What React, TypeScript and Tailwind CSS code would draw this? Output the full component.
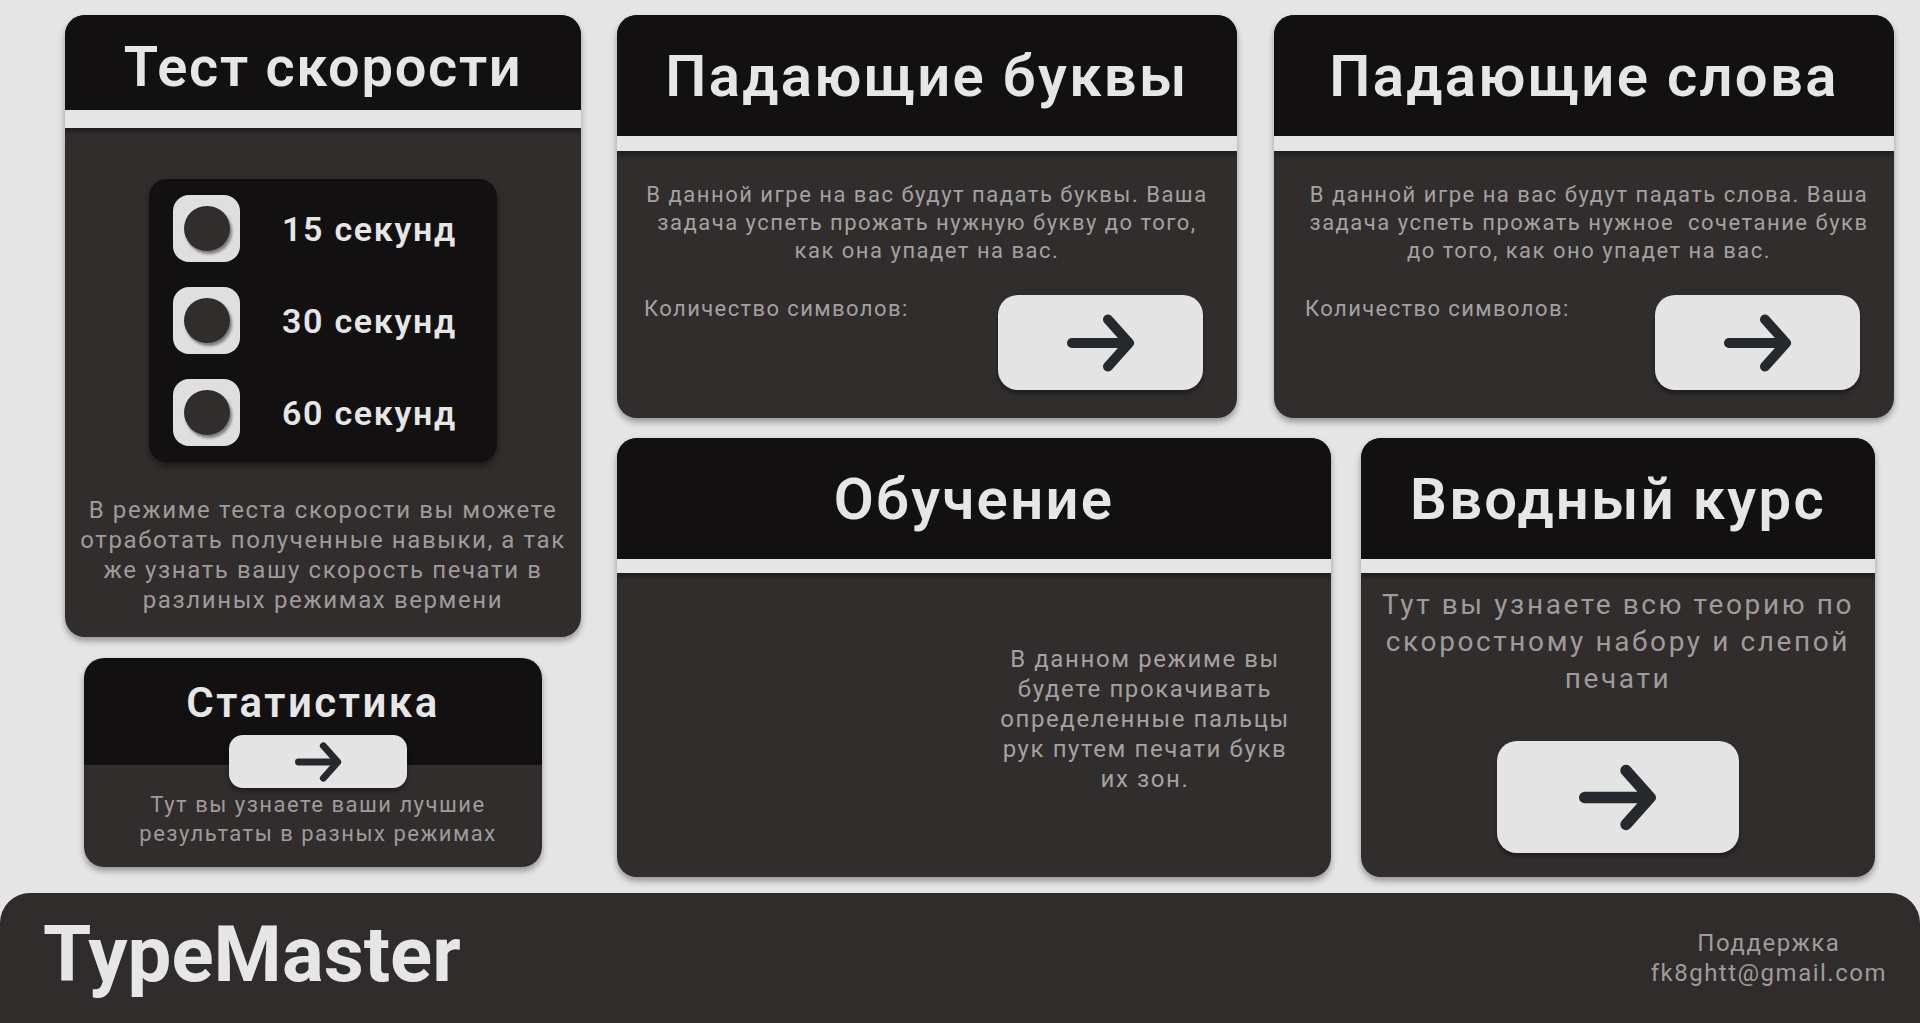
import React from "react";

const HEAD = "bg-[#121011]";
const BODY = "bg-[#312d2d]";

function Arrow({ className }: { className: string }) {
  return (
    <svg viewBox="0 0 68 58" className={className} fill="none" stroke="#25282c" strokeWidth={10} strokeLinecap="round" strokeLinejoin="round">
      <path d="M5 29H60" />
      <path d="M41 5.5L62 29L41 52.5" />
    </svg>
  );
}

function Stripe({ h }: { h: string }) {
  return <div className={`relative z-10 ${h} bg-[#e5e5e5] shadow-[0_4px_4px_rgba(0,0,0,0.35)]`} />;
}

function Radio({ label }: { label: string }) {
  return (
    <div className="flex items-center h-[67px]">
      <div className="w-[67px] h-[67px] rounded-[16px] bg-[#dfdfdf] flex items-center justify-center">
        <div className="w-[46px] h-[45px] rounded-full bg-[#312d2d] shadow-[2px_3px_3px_rgba(0,0,0,0.45)]" />
      </div>
      <span className="ml-[42px] text-[34px] font-semibold tracking-[0.05em] text-[#e6e6e6] leading-none">{label}</span>
    </div>
  );
}

export default function App() {
  return (
    <div className="w-[1920px] h-[1023px] bg-[#e5e5e5] flex flex-col overflow-hidden font-['Roboto',sans-serif]">
      <div className="flex pt-[15px] pl-[65px] h-[877px]">
        {/* Left column */}
        <div className="w-[516px] flex flex-col">
          <div className={`h-[622px] rounded-[20px] overflow-hidden ${BODY} flex flex-col shadow-[0_4px_6px_rgba(0,0,0,0.35)]`}>
            <div className={`${HEAD} h-[95px] flex items-center justify-center pt-[9px]`}>
              <h1 className="text-[56px] font-semibold leading-none tracking-[0.03em] text-[#e6e6e6]">Тест скорости</h1>
            </div>
            <Stripe h="h-[18px]" />
            <div className="flex-1 flex flex-col items-center">
              <div className={`mt-[51px] w-[348px] h-[283px] rounded-[18px] ${HEAD} shadow-[0_4px_6px_rgba(0,0,0,0.45)] pl-[24px] pt-[16px] flex flex-col gap-[25px]`}>
                <Radio label="15 секунд" />
                <Radio label="30 секунд" />
                <Radio label="60 секунд" />
              </div>
              <p className="mt-[33px] text-center text-[24px] leading-[30px] tracking-[1.6px] text-[#9e9b9b]">
                В режиме теста скорости вы можете<br />
                отработать полученные навыки, а так<br />
                же узнать вашу скорость печати в<br />
                разлиных режимах вермени
              </p>
            </div>
          </div>

          <div className="mt-[21px] ml-[19px] w-[458px] h-[209px] rounded-[20px] overflow-hidden bg-[linear-gradient(to_bottom,#121011_107px,#312d2d_107px)] flex flex-col shadow-[0_4px_6px_rgba(0,0,0,0.35)]">
            <h2 className="pt-[24px] text-center text-[42px] font-semibold leading-none tracking-[0.06em] text-[#e6e6e6]">Статистика</h2>
            <div className="mt-[11px] ml-[145px] w-[178px] h-[53px] rounded-[14px] bg-[#e4e4e4] flex items-center justify-center shadow-[0_4px_4px_rgba(0,0,0,0.35)]">
              <Arrow className="w-[47px] h-[40px]" />
            </div>
            <p className="mt-[2px] pl-[10px] text-center text-[22px] leading-[29px] tracking-[1.5px] text-[#9e9b9b]">
              Тут вы узнаете ваши лучшие<br />
              результаты в разных режимах
            </p>
          </div>
        </div>

        {/* Right area */}
        <div className="ml-[36px] flex flex-col">
          <div className="flex gap-[37px]">
            {[
              {
                title: "Падающие буквы",
                lines: ["В данной игре на вас будут падать буквы. Ваша", "задача успеть прожать нужную букву до того,", "как она упадет на вас."],
                pl: "pl-[27px]",
                tp: "",
              },
              {
                title: "Падающие слова",
                lines: ["В данной игре на вас будут падать слова. Ваша", "задача успеть прожать нужное\u00A0 сочетание букв", "до того, как оно упадет на вас."],
                pl: "pl-[31px]",
                tp: "pl-[10px]",
              },
            ].map((c) => (
              <div key={c.title} className={`w-[620px] h-[403px] rounded-[20px] overflow-hidden ${BODY} flex flex-col shadow-[0_4px_6px_rgba(0,0,0,0.35)]`}>
                <div className={`${HEAD} h-[121px] flex items-center justify-center`}>
                  <h2 className="text-[58px] font-semibold leading-none tracking-[0.04em] text-[#e6e6e6]">{c.title}</h2>
                </div>
                <Stripe h="h-[15px]" />
                <p className={`mt-[30px] ${c.tp} text-center text-[22px] leading-[28px] tracking-[1.5px] text-[#a3a1a1]`}>
                  {c.lines[0]}<br />{c.lines[1]}<br />{c.lines[2]}
                </p>
                <div className={`mt-[30px] flex justify-between items-start ${c.pl} pr-[34px]`}>
                  <span className="text-[22px] leading-[28px] tracking-[1.4px] text-[#a3a1a1]">Количество символов:</span>
                  <div className="w-[205px] h-[95px] rounded-[20px] bg-[#e4e4e4] flex items-center justify-center shadow-[0_4px_4px_rgba(0,0,0,0.35)]">
                    <Arrow className="w-[68px] h-[58px]" />
                  </div>
                </div>
              </div>
            ))}
          </div>

          <div className="mt-[20px] flex gap-[30px]">
            <div className={`w-[714px] h-[439px] rounded-[20px] overflow-hidden ${BODY} flex flex-col shadow-[0_4px_6px_rgba(0,0,0,0.35)]`}>
              <div className={`${HEAD} h-[121px] flex items-center justify-center`}>
                <h2 className="text-[58px] font-semibold leading-none tracking-[0.04em] text-[#e6e6e6]">Обучение</h2>
              </div>
              <Stripe h="h-[14px]" />
              <div className="flex justify-end">
                <p className="mt-[71px] mr-[36px] w-[300px] text-center text-[24px] leading-[30px] tracking-[1.6px] text-[#a3a1a1]">
                  В данном режиме вы<br />
                  будете прокачивать<br />
                  определенные пальцы<br />
                  рук путем печати букв<br />
                  их зон.
                </p>
              </div>
            </div>

            <div className={`w-[514px] h-[439px] rounded-[20px] overflow-hidden ${BODY} flex flex-col items-stretch shadow-[0_4px_6px_rgba(0,0,0,0.35)]`}>
              <div className={`${HEAD} h-[121px] flex items-center justify-center`}>
                <h2 className="text-[58px] font-semibold leading-none tracking-[0.04em] text-[#e6e6e6]">Вводный курс</h2>
              </div>
              <Stripe h="h-[14px]" />
              <p className="mt-[13px] text-center text-[28px] leading-[37px] tracking-[2.6px] text-[#9e9b9b]">
                Тут вы узнаете всю теорию по<br />
                скоростному набору и слепой<br />
                печати
              </p>
              <div className="mt-[44px] self-center w-[242px] h-[112px] rounded-[20px] bg-[#e4e4e4] flex items-center justify-center shadow-[0_4px_4px_rgba(0,0,0,0.35)]">
                <Arrow className="w-[78px] h-[67px]" />
              </div>
            </div>
          </div>
        </div>
      </div>

      <footer className="mt-[16px] h-[130px] rounded-t-[30px] bg-[#302c2c] flex items-center justify-between pl-[43px] pr-[33px]">
        <div className="pb-[6px] text-[78px] font-bold leading-none text-[#e6e6e6]">TypeMaster</div>
        <div className="text-center text-[24px] leading-[30px] tracking-[1.5px] text-[#9e9b9b]">
          <div>Поддержка</div>
          <div>fk8ghtt@gmail.com</div>
        </div>
      </footer>
    </div>
  );
}
